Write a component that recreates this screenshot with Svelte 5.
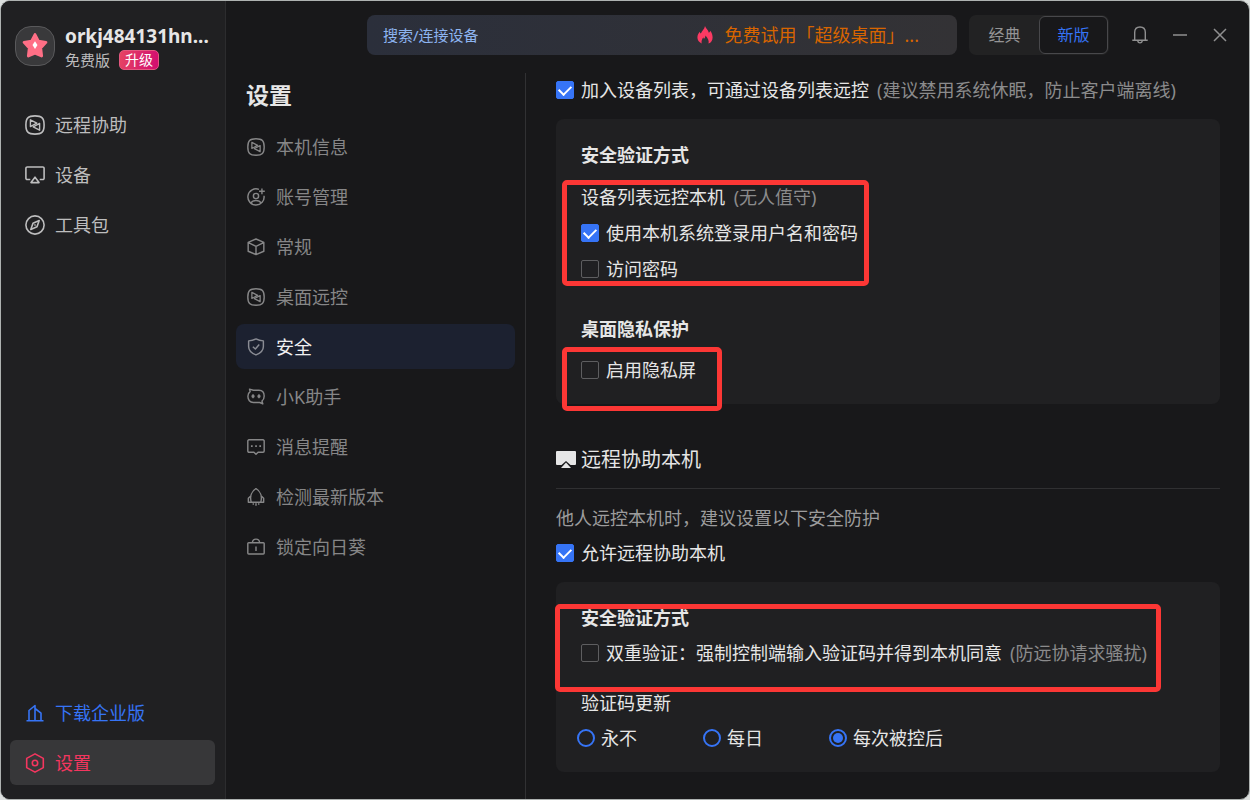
<!--
    App.svelte
    远程控制客户端 - 设置 / 安全 页面
-->
<script>
    // 左侧主导航
    const navItems = [
        { icon: 'remote', label: '远程协助' },
        { icon: 'device', label: '设备' },
        { icon: 'compass', label: '工具包' },
    ];

    // 设置菜单
    const menuItems = [
        { icon: 'remote', label: '本机信息' },
        { icon: 'account', label: '账号管理' },
        { icon: 'cube', label: '常规' },
        { icon: 'remote', label: '桌面远控' },
        { icon: 'shield', label: '安全' },
        { icon: 'robot', label: '小K助手' },
        { icon: 'message', label: '消息提醒' },
        { icon: 'rocket', label: '检测最新版本' },
        { icon: 'lock', label: '锁定向日葵' },
    ];

    const refreshOptions = ['永不', '每日', '每次被控后'];

    let activeMenu = $state('安全');
    let layout     = $state('新版');
    let keyword    = $state('');
    let refresh    = $state('每次被控后');

    let inDeviceList = $state(true);
    let useSystem    = $state(true);
    let usePassword  = $state(false);
    let privacy      = $state(false);
    let allowAssist  = $state(true);
    let doubleCheck  = $state(false);
</script>

{#snippet icon(name)}
    <svg class="icon" viewBox="0 0 20 20" fill="none" stroke="currentColor" stroke-width="1.6" stroke-linejoin="round" aria-hidden="true">
        {#if name === 'remote'}
            <path d="M10 .9C16.9.9 19.1 3.1 19.1 10S16.9 19.1 10 19.1.9 16.9.9 10 3.1.9 10 .9Z" />
            <path d="M5.4 4.8v6.8L11.8 8.2Z" stroke-width="1.4" />
            <path d="M14.6 8.400v6.800L8.200 11.800Z" stroke-width="1.4" />
        {:else if name === 'device'}
            <path d="M5.300 14.500H2.200A1.300 1.300 0 0 1 .9 13.200V3.300A1.300 1.300 0 0 1 2.200 2h15.600a1.300 1.300 0 0 1 1.300 1.300v9.900a1.300 1.300 0 0 1-1.300 1.300h-3.100" />
            <path d="M10 12.2 14 17.6H6Z" />
        {:else if name === 'compass'}
            <circle cx="10" cy="10" r="9.1" />
            <path d="M14.200 5.500 12 11.800l-6.200 2.700L8 8.200Z" />
            <path d="M9.500 10.500l1-1" />
        {:else if name === 'account'}
            <path d="M13.3 1.6A9 9 0 1 0 18.9 8.6" />
            <circle cx="10" cy="8.9" r="2.900" />
            <path d="M4.200 16.700c1.300-2.100 3.200-2.900 5.800-2.900s4.500.8 5.800 2.900M16.600.5v6.400M13.400 3.700h6.400" />
        {:else if name === 'cube'}
            <path d="M10 1.100 18.700 4.900v9.800L10 18.500 1.300 14.700V4.900ZM1.600 5.200 10 9.200l8.400-4M10 9.200v9" />
        {:else if name === 'shield'}
            <path d="M10 1.100c2.600 1.500 5.200 2.100 8.200 2.100v6.300c0 4.700-3.600 7.600-8.200 9.300-4.600-1.700-8.200-4.600-8.200-9.300V3.200c3 0 5.600-.6 8.200-2.100Z" />
            <path d="M6.500 9.700l2.800 2.500 4.300-5" />
        {:else if name === 'robot'}
            <path d="M3.500 4 2.800 1.300l4.300 1.200h6.200c3.600 0 5.800 2.500 5.800 6.500 0 2.300-.8 4.400-2.500 5.500l1 3.200-3.500-1.600H7C3.200 16.100 1 13.300 1 9.300 1 7 1.900 5 3.500 4Z" />
            <ellipse cx="6.700" cy="9.200" rx="1.300" ry="1.900" fill="currentColor" stroke-width=".8" />
            <ellipse cx="13.300" cy="9.200" rx="1.300" ry="1.900" fill="currentColor" stroke-width=".8" />
        {:else if name === 'message'}
            <path d="M2.200 2h15.600A1.300 1.300 0 0 1 19.100 3.300v11.200a1.300 1.300 0 0 1-1.300 1.300h-5.500L10 18l-2.300-2.200H2.200A1.300 1.300 0 0 1 .9 14.500V3.300A1.300 1.300 0 0 1 2.200 2Z" />
            <path d="M4.400 9h1.900M9.100 9H11M13.700 9h1.900" stroke-width="2" />
        {:else if name === 'rocket'}
            <path d="M4.700 15.800C3 9.500 5 3.500 10 .8c5 2.700 7 8.700 5.300 15Z" />
            <path d="M4.200 8.800 1.500 11.500v4.300h3.200M15.800 8.800l2.700 2.700v4.300h-3.200M7 17v1.500M10 17v2.800M13 17v1.500" />
        {:else if name === 'lock'}
            <rect x=".9" y="5.2" width="18.2" height="12.6" rx="1" />
            <path d="M6 5c.5-5 7.500-5 8 0M10 9.500v5" />
        {:else if name === 'building'}
            <path d="M1.500 17.800h17M4 17.500V7.500L10 2.500v15M10 5.500l6 4.700v7.300" />
        {:else if name === 'hexagon'}
            <path d="M10 .9 18.300 5.400v9.200L10 19.100 1.700 14.600V5.400Z" />
            <circle cx="10" cy="10" r="2.700" />
        {/if}
    </svg>
{/snippet}

<div class="window">
    <aside class="sidebar">
        <div class="profile">
            <div class="avatar">
                <svg viewBox="0 0 40 40" aria-hidden="true">
                    <path d="M20 8 23.600 14.800 31.500 16.200 26 22l1 8.500L20 27.500 13 30.500 14 22 8.500 16.200 16.400 14.800Z" fill="#ff6f86" stroke="#ff6f86" stroke-width="3" stroke-linejoin="round" />
                    <path d="M20 15 22.600 19 20 23.200 17.400 19Z" fill="#fff" />
                </svg>
            </div>
            <div class="who">
                <strong>orkj484131hn...</strong>
                <div class="plan">
                    <span>免费版</span>
                    <a class="upgrade" href="#upgrade">升级</a>
                </div>
            </div>
        </div>

        <nav class="nav">
            {#each navItems as item}
                <button class="nav-item">{@render icon(item.icon)}{item.label}</button>
            {/each}
        </nav>

        <nav class="nav nav-bottom">
            <a class="nav-item blue" href="#enterprise">{@render icon('building')}下载企业版</a>
            <button class="nav-item current">{@render icon('hexagon')}设置</button>
        </nav>
    </aside>

    <main>
        <header>
            <div class="search">
                <input type="text" aria-label="搜索/连接设备" placeholder="搜索/连接设备" bind:value={keyword} />
                <a class="promo" href="#trial">
                    <svg class="flame" viewBox="0 0 16 20" fill="#fb3a63" aria-hidden="true">
                        <path d="M8 0c.8 2.500 3.500 4 4 7 .8-.3 1.300-1 1.500-2C15.500 7.500 16 10 16 12c0 3-1.500 5.500-4.300 6.500.8-3-.7-5.500-3.200-8.500-.2 2-.8 3-1.500 3.500-.5-.5-.7-1-.8-1.700-1.400 2-2.200 4-1.700 6.500C1.500 17 0 15 0 12.200 0 9.500 1.200 7.500 2.500 6c.2 1 .6 1.700 1.200 2C4.500 5 7.500 3.500 8 0Z" />
                    </svg>
                    免费试用「超级桌面」...
                </a>
            </div>
            <div class="toggle">
                {#each ['经典', '新版'] as name}
                    <button class:on={layout === name} onclick={() => (layout = name)}>{name}</button>
                {/each}
            </div>
            <div class="window-tools">
                <button aria-label="通知">
                    <svg viewBox="0 0 16 18" fill="none" stroke="currentColor" stroke-width="1.4" aria-hidden="true">
                        <path d="M.3 14.200h15.400M2.700 14V6.300C2.700 2.900 5 1 8 1s5.300 1.900 5.300 5.300V14M5.700 14.500c.3 3.200 4.300 3.200 4.600 0" />
                    </svg>
                </button>
                <button aria-label="最小化">
                    <svg viewBox="0 0 16 18" fill="none" stroke="currentColor" stroke-width="1.6" aria-hidden="true">
                        <path d="M1 9h14" />
                    </svg>
                </button>
                <button aria-label="关闭">
                    <svg viewBox="0 0 16 18" fill="none" stroke="currentColor" stroke-width="1.5" aria-hidden="true">
                        <path d="M2 3l12 12M14 3 2 15" />
                    </svg>
                </button>
            </div>
        </header>

        <div class="body">
            <section class="menu">
                <h1>设置</h1>
                <nav>
                    {#each menuItems as item}
                        <button class="menu-item" class:active={activeMenu === item.label} onclick={() => (activeMenu = item.label)}>
                            {@render icon(item.icon)}{item.label}
                        </button>
                    {/each}
                </nav>
            </section>

            <section class="content">
                <label class="option">
                    <input type="checkbox" bind:checked={inDeviceList} />
                    <span>加入设备列表，可通过设备列表远控</span>
                    <small>(建议禁用系统休眠，防止客户端离线)</small>
                </label>

                <div class="card">
                    <h3>安全验证方式</h3>
                    <div class="group">
                        <p>设备列表远控本机 <small>(无人值守)</small></p>
                        <label class="option">
                            <input type="checkbox" bind:checked={useSystem} />
                            <span>使用本机系统登录用户名和密码</span>
                        </label>
                        <label class="option">
                            <input type="checkbox" bind:checked={usePassword} />
                            <span>访问密码</span>
                        </label>
                    </div>
                    <h3>桌面隐私保护</h3>
                    <label class="option privacy">
                        <input type="checkbox" bind:checked={privacy} />
                        <span>启用隐私屏</span>
                    </label>
                    <!-- 红色标注框 -->
                    <div class="mark mark-device"></div>
                    <div class="mark mark-privacy"></div>
                </div>

                <h2>
                    <svg viewBox="0 0 20 18" fill="currentColor" aria-hidden="true">
                        <path d="M1 0h18a1 1 0 0 1 1 1v12a1 1 0 0 1-1 1h-4.500L10 10 5.500 14H1a1 1 0 0 1-1-1V1a1 1 0 0 1 1-1Z" />
                        <path d="M10 11.500 15 17H5Z" />
                    </svg>
                    远程协助本机
                </h2>
                <p class="desc">他人远控本机时，建议设置以下安全防护</p>
                <label class="option">
                    <input type="checkbox" bind:checked={allowAssist} />
                    <span>允许远程协助本机</span>
                </label>

                <div class="card">
                    <h3>安全验证方式</h3>
                    <label class="option double">
                        <input type="checkbox" bind:checked={doubleCheck} />
                        <span>双重验证：强制控制端输入验证码并得到本机同意</span>
                        <small>(防远协请求骚扰)</small>
                    </label>
                    <p class="refresh-title">验证码更新</p>
                    <div class="radios">
                        {#each refreshOptions as name}
                            <label class="option">
                                <input type="radio" name="refresh" value={name} bind:group={refresh} />
                                <span>{name}</span>
                            </label>
                        {/each}
                    </div>
                    <div class="mark mark-double"></div>
                </div>
            </section>
        </div>
    </main>
</div>

<style>
:global(body) { background: #dcdfde; }
* { box-sizing: border-box; }
.window {
    display: flex; height: 100vh; overflow: hidden;
    border: 1px solid #aeb2b1; border-radius: 10px;
    background: #18181a; color: #e6e6e6;
    font-family: "Noto Sans", "Noto Sans CJK SC", sans-serif;
    font-size: 18px; line-height: 24px;
}
button, input { font: inherit; color: inherit; }
button { border: none; background: none; padding: 0; cursor: pointer; }
a { text-decoration: none; }
h1, h2, h3, p { margin: 0; }
small { font-size: 18px; color: #8b8b8c; }

/* 左侧栏 */
.sidebar {
    display: flex; flex-direction: column; flex: 0 0 225px;
    padding: 24px 10px 14px 9px;
    background: #202022; border-right: 1px solid #2c2c2e;
}
.profile { display: flex; gap: 10px; padding-left: 5px; }
.avatar {
    width: 40px; height: 40px; margin-top: 1px;
    background: #39393b; border: 1px solid #59595b; border-radius: 16px;
}
.avatar svg { display: block; width: 100%; }
.who strong { display: block; font-size: 19px; line-height: 22px; }
.plan { display: flex; align-items: center; gap: 9px; font-size: 15px; line-height: 20px; margin-top: 3px; color: #bcbcbd; }
.upgrade {
    padding: 0 5px; border-radius: 5px; font-size: 14px; color: #fff;
    background: linear-gradient(100deg, #e64463, #d10c70);
    border: 1px solid #e2577f; line-height: 18px;
}
.nav { display: flex; flex-direction: column; gap: 5px; margin-top: 32px; }
.nav-bottom { margin-top: auto; }
.nav-item {
    display: flex; align-items: center; gap: 10px;
    height: 45px; padding: 0 15px; border-radius: 6px; color: #bdbdbe;
}
.nav-item .icon { width: 20px; height: 20px; }
.nav-item.blue { color: #3674f6; }
.nav-item.current { background: #373739; color: #f4365f; }

/* 顶部栏 */
main { display: flex; flex-direction: column; flex: 1; min-width: 0; }
header { display: flex; align-items: center; height: 68px; padding: 0 17px 0 141px; }
.search {
    display: flex; align-items: center; justify-content: space-between; flex: 1;
    height: 40px; min-width: 0; padding: 0 38px 0 16px; border-radius: 8px;
    background: linear-gradient(90deg, #2b2f3b, #333235);
}
.search input { flex: 1; min-width: 0; padding: 0; border: none; outline: none; background: none; font-size: 15px; }
.search input::placeholder { color: #8db4f0; opacity: 1; }
.promo { display: flex; align-items: center; gap: 12px; color: #d86500; white-space: nowrap; }
.flame { width: 16px; height: 19px; }
.toggle { display: flex; width: 140px; height: 40px; margin-left: 12px; padding: 1px; border-radius: 7px; background: #222223; }
.toggle button { flex: 1; border: 1px solid transparent; border-radius: 6px; font-size: 16px; color: #949495; }
.toggle button.on { background: #18181a; border-color: #48484b; color: #3674f6; }
.window-tools { display: flex; gap: 16px; margin-left: 19px; color: #8f8f90; }
.window-tools button { width: 24px; height: 24px; display: grid; place-items: center; }
.window-tools svg { width: 16px; height: 18px; }

/* 设置菜单 */
.body { display: flex; flex: 1; min-height: 0; }
.menu { flex: 0 0 300px; margin-top: 4px; padding: 7px 10px 0; border-right: 1px solid #313133; }
h1 { padding-left: 10px; font-size: 23px; line-height: 30px; }
.menu nav { display: flex; flex-direction: column; gap: 5px; margin-top: 14px; }
.menu-item {
    display: flex; align-items: center; gap: 11px;
    height: 45px; padding: 0 11px; border-radius: 8px; color: #868687;
}
.menu-item .icon { width: 18px; height: 18px; }
.menu-item.active { background: #1c2130; color: #f0f0f0; }
.menu-item.active .icon { color: #8a8c94; }

/* 设置内容 */
.content { flex: 1; min-width: 0; padding: 9px 29px 0 30px; overflow: hidden; }
.option { display: flex; align-items: center; white-space: nowrap; }
.option span { margin-left: 7px; }
.option small { margin-left: 8px; }
p small { margin-left: 4px; }
.card { position: relative; margin-top: 17px; padding: 24px 25px 22px; border-radius: 8px; background: #202022; }
h3 { font-size: 18px; line-height: 24px; }
.group { display: flex; flex-direction: column; gap: 12px; margin: 18px 0 36px; }
.privacy { margin-top: 17px; }
.double { margin-top: 11px; }
h2 {
    display: flex; align-items: center; gap: 5px;
    margin-top: 42px; padding-bottom: 14px; border-bottom: 1px solid #303032;
    font-size: 20px; line-height: 28px; font-weight: 400;
}
h2 svg { width: 20px; height: 18px; }
.desc { margin: 17px 0 11px; color: #9c9c9d; }
.refresh-title { margin: 26px 0 11px; }
.radios { display: grid; grid-template-columns: repeat(3, 126px); margin-left: -4px; }
.radios span { margin-left: 6px; }

input[type="checkbox"], input[type="radio"] {
    display: grid; place-items: center; appearance: none;
    flex: none; width: 18px; height: 18px; margin: 0;
}
input[type="checkbox"] { border: 1px solid #5e5e60; border-radius: 2px; }
input[type="checkbox"]:checked { background: #3674f6; border-color: #3674f6; }
input[type="checkbox"]:checked::after {
    content: ""; width: 10px; height: 6px; margin-bottom: 3px;
    border: solid #fff; border-width: 0 0 2px 2px; transform: rotate(-45deg);
}
input[type="radio"] { border: 2px solid #3674f6; border-radius: 50%; }
input[type="radio"]:checked::after { content: ""; width: 10px; height: 10px; border-radius: 50%; background: #3674f6; }

/* 标注框 */
.mark { position: absolute; border: 5px solid #fc3735; border-radius: 5px; pointer-events: none; }
.mark-device { left: 6px; top: 61px; width: 307px; height: 106px; }
.mark-privacy { left: 6px; top: 228px; width: 160px; height: 64px; }
.mark-double { left: -1px; top: 22px; width: 606px; height: 88px; }
</style>
